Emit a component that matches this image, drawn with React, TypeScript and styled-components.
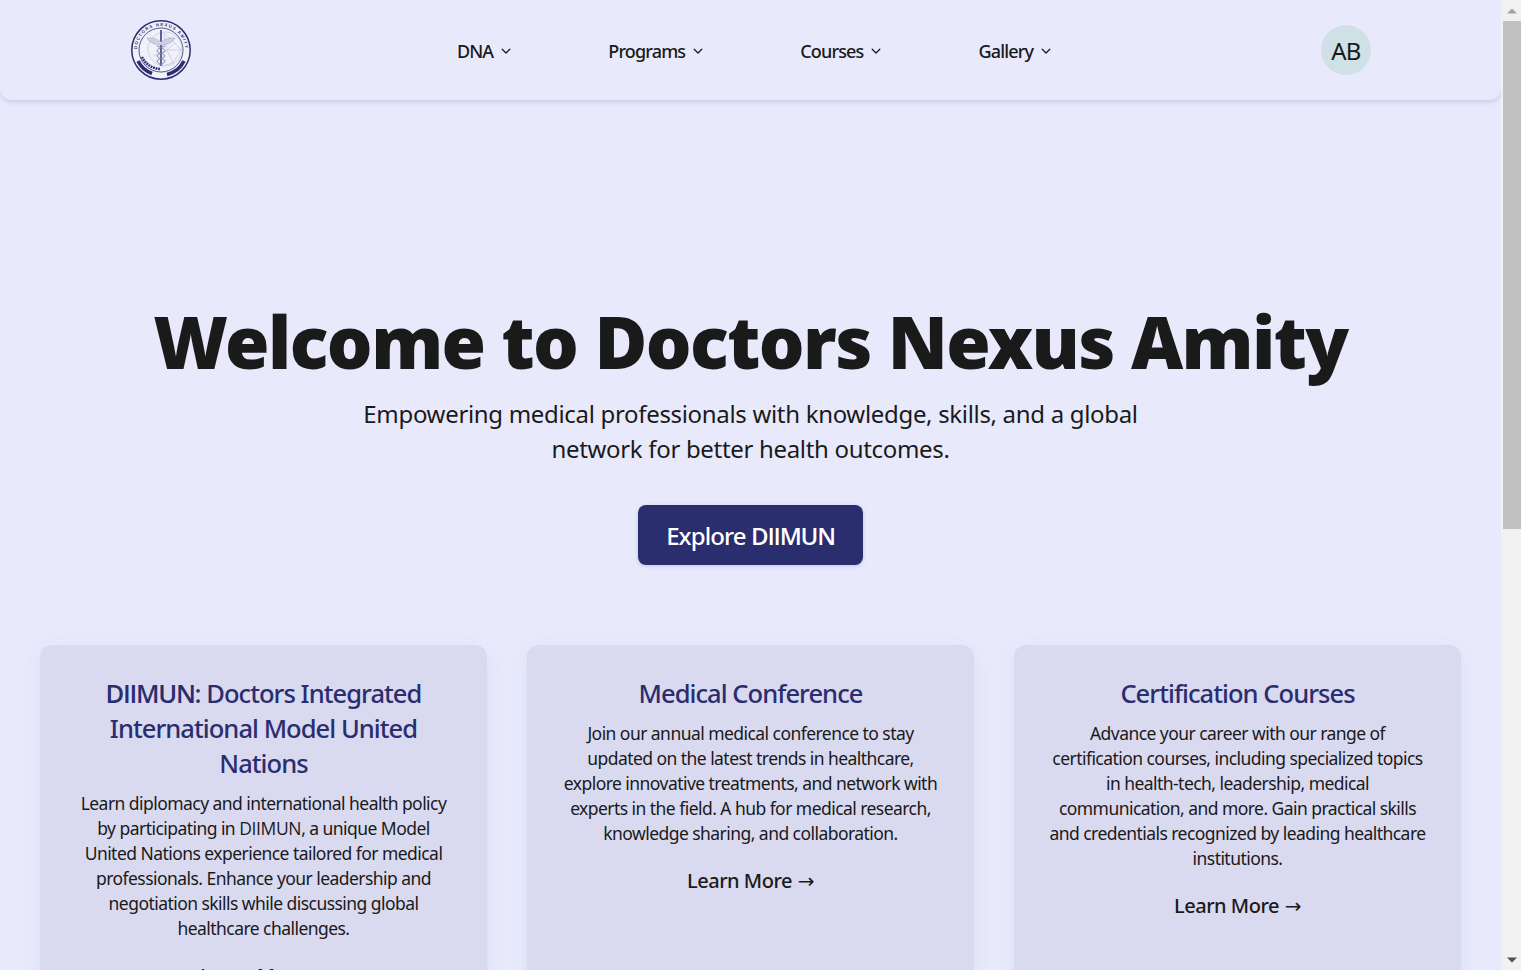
import React from "react";
import styled, { createGlobalStyle } from "styled-components";

const GlobalStyle = createGlobalStyle`
  body {
    margin: 0;
    background: #e8eafc;
    color: #1a1a1a;
    font-family: "Noto Sans", "Open Sans", sans-serif;
  }
`;

const Shell = styled.div`
  display: flex;
  align-items: flex-start;
`;

const Page = styled.div`
  flex: 1;
  min-width: 0;
  min-height: 1772px;
  display: flex;
  flex-direction: column;
`;

const ScrollTrack = styled.div`
  position: sticky;
  top: 0;
  flex: none;
  width: 20px;
  height: 100vh;
  background: #f1f1f1;
  display: flex;
  flex-direction: column;
  align-items: flex-end;
`;

const ScrollButton = styled.div`
  flex: none;
  width: 18px;
  height: 21px;
  display: flex;
  align-items: center;
  justify-content: center;
`;

const ScrollThumb = styled.div`
  flex: none;
  width: 18px;
  height: 508px;
  background: #c1c1c1;
`;

const ScrollGap = styled.div`
  flex: 1;
`;

const Header = styled.header`
  height: 100px;
  padding: 0 130px 0 131px;
  display: flex;
  align-items: center;
  justify-content: space-between;
  background: #e8eafc;
  border-radius: 0 0 12px 12px;
  box-shadow: 0 2px 5px rgba(40, 44, 110, 0.16);
`;

const Nav = styled.nav`
  display: flex;
  gap: 96px;
  margin-right: 3px;
  margin-top: 2px;
`;

const NavItem = styled.a`
  display: flex;
  align-items: center;
  gap: 7px;
  font-size: 18px;
  font-weight: 500;
  letter-spacing: -0.85px;
  color: #1a1a1a;
`;

const Avatar = styled.div`
  width: 50px;
  height: 50px;
  border-radius: 50%;
  background: #cfe0e6;
  display: flex;
  align-items: center;
  justify-content: center;
  font-size: 24px;
  letter-spacing: -0.8px;
  color: #1a1a1a;
`;

const Hero = styled.section`
  padding: 198px 40px 0;
  display: flex;
  flex-direction: column;
  align-items: center;
  text-align: center;
`;

const Title = styled.h1`
  margin: 0;
  font-size: 72px;
  line-height: 86px;
  font-weight: 900;
  letter-spacing: -1.6px;
  color: #1a1a1a;
  white-space: nowrap;
`;

const Subtitle = styled.p`
  margin: 12px 0 0;
  max-width: 800px;
  font-size: 24px;
  line-height: 35px;
  letter-spacing: -0.32px;
`;

const PrimaryButton = styled.button`
  margin-top: 39px;
  width: 225px;
  height: 60px;
  border: none;
  border-radius: 8px;
  background: #2a2d6e;
  color: #ffffff;
  font-family: inherit;
  font-size: 24px;
  font-weight: 500;
  letter-spacing: -0.9px;
  box-shadow: 0 1px 4px rgba(40, 44, 110, 0.2);
`;

// Noto Sans draws serifs on a doubled I, the reference does not
const Acronym = styled.span<{ $strong?: boolean }>`
  font-family: "Open Sans", sans-serif;
  font-weight: ${(props) => (props.$strong ? 600 : 400)};
  letter-spacing: ${(props) => (props.$strong ? "-0.05em" : "-0.02em")};
`;

const CardGrid = styled.section`
  margin-top: 80px;
  padding: 0 40px;
  display: grid;
  grid-template-columns: repeat(3, 1fr);
  gap: 40px;
`;

const Card = styled.article`
  padding: 31px 32px 32px;
  background: #d9d9f0;
  border-radius: 12px;
  box-shadow: 0 4px 20px rgba(40, 44, 110, 0.06);
  text-align: center;
`;

const CardTitle = styled.h2`
  margin: 0;
  font-size: 25.5px;
  line-height: 35px;
  font-weight: 500;
  letter-spacing: -0.95px;
  color: #2a2d6e;
`;

const CardText = styled.p`
  margin: 10px 0 0;
  font-size: 17.5px;
  line-height: 25px;
  letter-spacing: -0.55px;
  color: #1a1a1a;
`;

const CardLink = styled.a`
  display: block;
  margin-top: 21px;
  font-size: 20px;
  line-height: 27px;
  font-weight: 500;
  letter-spacing: -0.5px;
  color: #1a1a1a;
`;

const LinkArrow = styled.span`
  font-family: "DejaVu Sans", sans-serif;
  font-weight: 400;
  margin-left: 1px;
`;

const cards = [
  {
    key: "diimun",
    title: (
      <>
        <Acronym $strong>DIIMUN</Acronym>: Doctors Integrated International Model United Nations
      </>
    ),
    text: (
      <>
        Learn diplomacy and international health policy by participating in <Acronym>DIIMUN</Acronym>, a unique Model United Nations experience
        tailored for medical professionals. Enhance your leadership and negotiation skills while discussing global healthcare challenges.
      </>
    ),
  },
  {
    key: "conference",
    title: "Medical Conference",
    text: "Join our annual medical conference to stay updated on the latest trends in healthcare, explore innovative treatments, and network with experts in the field. A hub for medical research, knowledge sharing, and collaboration.",
  },
  {
    key: "courses",
    title: "Certification Courses",
    text: "Advance your career with our range of certification courses, including specialized topics in health-tech, leadership, medical communication, and more. Gain practical skills and credentials recognized by leading healthcare institutions.",
  },
];

function Chevron() {
  return (
    <svg width="12" height="12" viewBox="0 0 12 12" fill="none" stroke="#1a1a1a" strokeWidth="1.3" strokeLinecap="round" strokeLinejoin="round">
      <path d="M2.2 4.3 6 8l3.8-3.7" />
    </svg>
  );
}

function Logo() {
  return (
    <svg width="60" height="60" viewBox="0 0 60 60" fill="none">
      <defs>
        <path id="logo-ring" d="M7.450 38.200A24 24 0 1 1 52.550 38.200" />
      </defs>
      <circle cx="30" cy="30" r="29.2" stroke="#2a2d6e" strokeWidth="1.5" fill="#f0f1fb" />
      <circle cx="30" cy="30" r="22" stroke="#2a2d6e" strokeWidth="0.8" />
      <text fill="#3a3e7c" fontSize="4.4" fontWeight="700" letterSpacing="1.1" fontFamily="Liberation Sans, sans-serif">
        <textPath href="#logo-ring" startOffset="50%" textAnchor="middle">
          DOCTORS NEXUS AMITY
        </textPath>
      </text>
      <path d="M36 54.400A25.500 25.500 0 0 0 53 41M21 53.500A25.500 25.500 0 0 1 7 41" stroke="#2a2d6e" strokeWidth="3.6" />
      <g stroke="#c2c5dd" strokeWidth="0.7">
        <circle cx="34" cy="29" r="17" />
        <path d="M33 13 44 23 50 30 42 43 31 46M33 13 36 30 42 43M44 23 36 30 22 36M36 30 50 30" />
      </g>
      <path d="M11 37A21 21 0 0 0 29 49" stroke="#2a2d6e" strokeWidth="2.6" strokeDasharray="1.800 0.800" />
      <path d="M30 10v36" stroke="#3a3e7c" strokeWidth="1.6" />
      <path d="M30 22C26 18.500 21 17.500 16 18 18 22 23 25 30 25 37 25 42 22 44 18 39 17.500 34 18.500 30 22Z" fill="#cdd0e2" stroke="#9a9dbc" strokeWidth="0.5" />
      <path d="M26 26c5 2 8 3 8 5s-8 3-8 5 8 3 8 5-4 3-4 5M34 26c-5 2-8 3-8 5s8 3 8 5-8 3-8 5 4 3 4 5" stroke="#7c7fa6" strokeWidth="1" />
    </svg>
  );
}

function App() {
  return (
    <Shell>
      <GlobalStyle />
      <Page>
        <Header>
          <Logo />
          <Nav>
            {["DNA", "Programs", "Courses", "Gallery"].map((label) => (
              <NavItem key={label}>
                {label}
                <Chevron />
              </NavItem>
            ))}
          </Nav>
          <Avatar>AB</Avatar>
        </Header>
        <Hero>
          <Title>Welcome to Doctors Nexus Amity</Title>
          <Subtitle>Empowering medical professionals with knowledge, skills, and a global network for better health outcomes.</Subtitle>
          <PrimaryButton>
            Explore <Acronym $strong>DIIMUN</Acronym>
          </PrimaryButton>
        </Hero>
        <CardGrid>
          {cards.map((card) => (
            <Card key={card.key}>
              <CardTitle>{card.title}</CardTitle>
              <CardText>{card.text}</CardText>
              <CardLink>
                Learn More <LinkArrow>→</LinkArrow>
              </CardLink>
            </Card>
          ))}
        </CardGrid>
      </Page>
      <ScrollTrack>
        <ScrollButton>
          <svg width="10" height="6" viewBox="0 0 10 6">
            <path d="M0 5.500h10L5 .5z" fill="#a3a3a3" />
          </svg>
        </ScrollButton>
        <ScrollThumb />
        <ScrollGap />
        <ScrollButton>
          <svg width="10" height="6" viewBox="0 0 10 6">
            <path d="M0 .5h10L5 5.500z" fill="#505050" />
          </svg>
        </ScrollButton>
      </ScrollTrack>
    </Shell>
  );
}

export default App;
